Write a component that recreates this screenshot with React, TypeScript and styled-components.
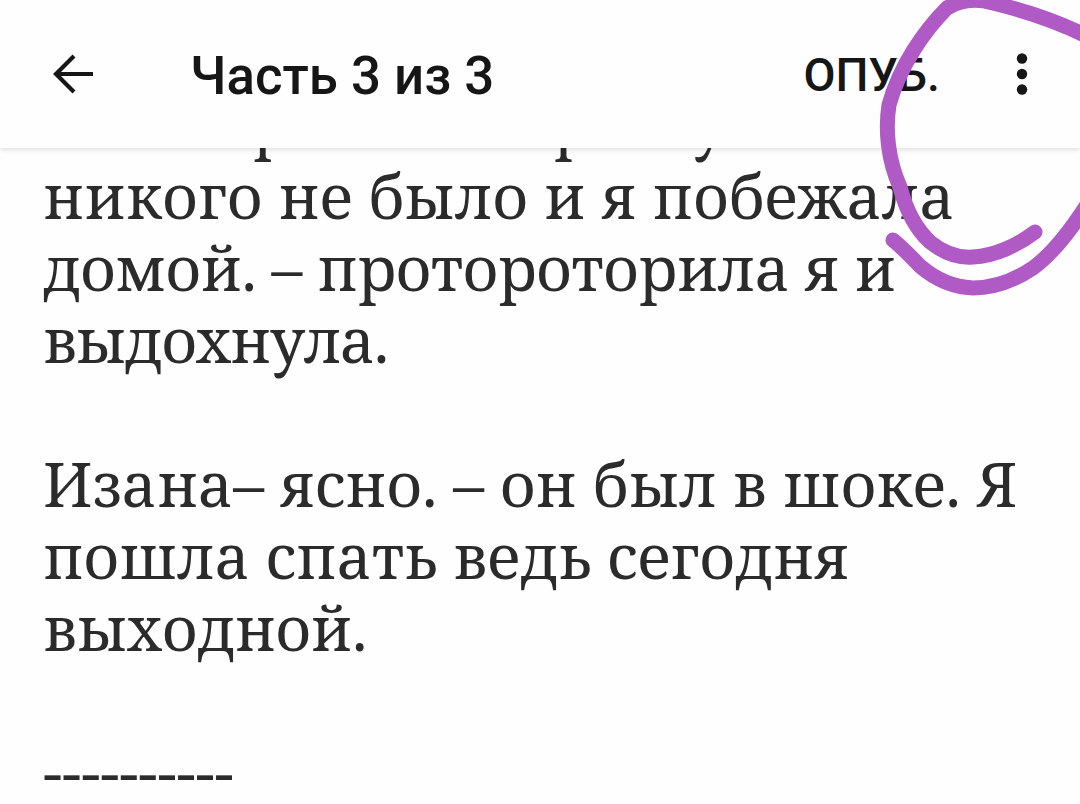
import React from "react";
import styled, { createGlobalStyle } from "styled-components";

const Global = createGlobalStyle`
  html, body { margin: 0; padding: 0; background: #fffeff; overflow: hidden; }
`;
const Page = styled.div`
  position: relative;
  width: 1080px;
  height: 804px;
  overflow: hidden;
  background: #fffeff;
`;
const Bar = styled.header`
  position: relative;
  z-index: 2;
  height: 148px;
  display: flex;
  align-items: center;
  padding: 0 52px 0 52px;
  box-sizing: border-box;
  background: #fffeff;
  box-shadow: 0 2px 5px rgba(0,0,0,.12);
  font-family: "Roboto", "Liberation Sans", sans-serif;
  color: #161616;
`;
const Title = styled.div`
  flex: 1;
  margin-left: 96px;
  font-size: 52.8px;
  font-weight: 500;
  line-height: 1;
  padding-top: 4px;
`;
const Publish = styled.div`
  font-size: 46.5px;
  font-weight: 500;
  line-height: 1;
  margin-right: 76px;
  padding-top: 2px;
`;
const Story = styled.main`
  margin-top: -61px;
  padding-left: 43px;
  font-family: "Noto Serif", "DejaVu Serif", "Liberation Serif", serif;
  font-size: 61.5px;
  line-height: 72px;
  color: #2b2b2b;
  white-space: nowrap;
`;
const Para = styled.p`
  margin: 0 0 72px;
`;
const Line = styled.span<{ $track?: number }>`
  display: block;
  letter-spacing: ${(p) => p.$track ?? 0}px;
`;
const Rule = styled.p`
  margin: -17px 0 0;
  padding-top: 17px;
`;
const Mark = styled.svg`
  position: absolute;
  z-index: 3;
  left: 0;
  top: 0;
  pointer-events: none;
`;
export default function App() {
  return (
    <Page>
      <Global />
      <Bar>
        <svg width="42" height="42" viewBox="0 0 42 42" fill="none" stroke="#161616" strokeWidth="4.2"><path d="M41 21H4M22 3 4 21l18 18" /></svg>
        <Title>Часть 3 из 3</Title>
        <Publish>ОПУБ.</Publish>
        <svg width="12" height="42" viewBox="0 0 12 42" fill="#161616"><circle cx="6" cy="5.5" r="5.2" /><circle cx="6" cy="21" r="5.2" /><circle cx="6" cy="36.5" r="5.2" /></svg>
      </Bar>
      <Story>
        <Para>
          <Line>Я шли рано и пори ну и все</Line>
          <Line>никого не было и я побежала</Line>
          <Line $track={-0.58}>домой. – протороторила я и</Line>
          <Line $track={-1.3}>выдохнула.</Line>
        </Para>
        <Para>
          <Line>Изана– ясно. – он был в шоке. Я</Line>
          <Line>пошла спать ведь сегодня</Line>
          <Line $track={-0.35}>выходной.</Line>
        </Para>
        <Rule>----------</Rule>
      </Story>
      <Mark width="1080" height="804" viewBox="0 0 1080 804" fill="none" stroke="#b05ac5" strokeLinecap="round" strokeLinejoin="round">
        <path strokeWidth="15" d="M1090 38C1060 22 1030 12 993 3C975 -2 960 0 947 8C925 30 900 65 889 105C885 130 888 160 900 187C906 210 915 228 930 242C945 254 960 258 973 257C995 256 1018 245 1035 232" />
        <path strokeWidth="15" d="M893 240C905 250 912 258 920 266C935 279 952 287 973 288C995 288 1015 280 1033 268C1052 254 1070 232 1090 200" />
      </Mark>
    </Page>
  );
}
